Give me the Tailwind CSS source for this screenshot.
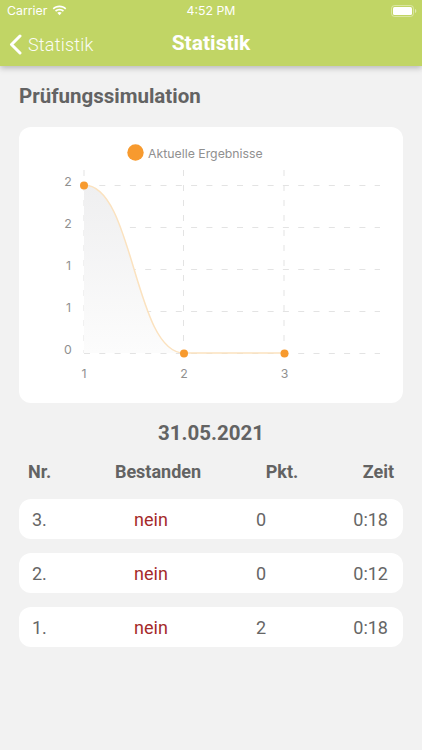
<!DOCTYPE html>
<html lang="de">
<head>
  <meta charset="UTF-8" />
  <meta name="viewport" content="width=device-width, initial-scale=1.0" />
  <title>Statistik</title>
  <script src="https://cdn.jsdelivr.net/npm/@tailwindcss/browser@4"></script>
</head>
<body class="w-[422px] h-[750px] overflow-hidden bg-[#f2f2f2] font-['Roboto',sans-serif]">

  <!-- Navbar -->
  <header class="relative h-[66px] bg-[#c1d565] text-white shadow-[0_2px_6px_rgba(0,0,0,0.25)]">
    <div class="relative h-[22px] flex items-center justify-between pl-[7px] pr-[5px] font-['Inter',sans-serif] text-[12.3px]">
      <div class="flex items-center gap-[5px]">
        <span>Carrier</span>
        <svg width="15" height="11" viewBox="0 0 15 11" fill="white" class="-mt-[1px]">
          <path d="M7.5 2.2c2.2 0 4.2.8 5.7 2.2l1.1-1.2C12.5 1.4 10.1.4 7.5.4S2.5 1.4.7 3.2l1.1 1.2c1.5-1.4 3.5-2.2 5.7-2.2z"/>
          <path d="M7.5 5.4c1.3 0 2.5.5 3.4 1.3l1.1-1.2C10.8 4.4 9.2 3.7 7.5 3.7s-3.3.7-4.5 1.8l1.1 1.2c.9-.8 2.1-1.3 3.4-1.3z"/>
          <path d="M7.5 7c-.9 0-1.6.3-2.2.8l2.2 2.5 2.2-2.5C9.1 7.3 8.4 7 7.5 7z"/>
        </svg>
      </div>
      <span class="absolute left-0 right-0 text-center">4:52 PM</span>
      <svg width="26" height="12" viewBox="0 0 26 12">
        <rect x="0.5" y="0.5" width="22" height="11" rx="3" fill="none" stroke="white" stroke-opacity="0.4"/>
        <rect x="2" y="2" width="19" height="8" rx="1.5" fill="white"/>
        <path d="M24 4v4c.8-.3 1.3-1.1 1.3-2S24.800 4.300 24 4z" fill="white" fill-opacity="0.5"/>
      </svg>
    </div>
    <div class="relative h-[44px] flex items-center justify-center">
      <div class="absolute left-[9px] top-0 h-full flex items-center gap-[6px]">
        <svg width="13" height="21" viewBox="0 0 13 21" fill="none" stroke="white" stroke-width="3" stroke-linecap="round" stroke-linejoin="round">
          <path d="M11 2 2.500 10.500 11 19"/>
        </svg>
        <span class="text-[18px] font-light tracking-[0.2px] text-white/95">Statistik</span>
      </div>
      <h1 class="text-[21px] font-bold">Statistik</h1>
    </div>
  </header>

  <main class="px-[19px]">
    <h2 class="pt-[18px] text-[20.500px] leading-[24px] font-bold text-[#636363]">Prüfungssimulation</h2>

    <!-- Chart -->
    <section class="mt-[19px] h-[276px] bg-white rounded-[12px]">
      <svg width="384" height="276" viewBox="19 127 384 276" class="block">
        <defs>
          <linearGradient id="area" x1="0" y1="0" x2="0" y2="1">
            <stop offset="0" stop-color="#efeff0" />
            <stop offset="1" stop-color="#fcfcfc" />
          </linearGradient>
        </defs>
        <g stroke="#e3e3e3" stroke-width="1" stroke-dasharray="6 9.300" fill="none">
          <path d="M84 185.500H380M84 227.500H380M84 269.500H380M84 311.500H380M84 353.500H380"/>
          <path d="M84 170V353M183.500 170V353M284 170V353" stroke-dasharray="6 9"/>
        </g>
        <path d="M84 185C134 185 134 353 184 353H284V353H84Z" fill="url(#area)"/>
        <path d="M84 185C134 185 134 353 184 353H284" fill="none" stroke="#fbe2bf" stroke-width="1.500"/>
        <g fill="#f79a2e">
          <circle cx="84" cy="185.500" r="4"/>
          <circle cx="184" cy="353.500" r="4"/>
          <circle cx="284.500" cy="353.500" r="4"/>
          <circle cx="135.500" cy="152.500" r="8.200"/>
        </g>
        <g font-family="Inter, sans-serif" font-size="12.300" fill="#909090">
          <text x="148" y="158">Aktuelle Ergebnisse</text>
          <g text-anchor="middle">
            <text x="68" y="186">2</text>
            <text x="68" y="228">2</text>
            <text x="68.500" y="270">1</text>
            <text x="68.500" y="312">1</text>
            <text x="68" y="354">0</text>
            <text x="84" y="378">1</text>
            <text x="184" y="378">2</text>
            <text x="284.500" y="378">3</text>
          </g>
        </g>
      </svg>
    </section>

    <h3 class="mt-[17px] text-center text-[20.500px] leading-[26px] font-bold text-[#636363]">31.05.2021</h3>

    <!-- Table head -->
    <div class="mt-[15px] -mx-px pl-[10px] pr-[10px] grid grid-cols-[60px_140px_108px_1fr] text-[18px] leading-[22px] font-bold text-[#636363]">
      <span>Nr.</span>
      <span class="text-center">Bestanden</span>
      <span class="text-center">Pkt.</span>
      <span class="text-right">Zeit</span>
    </div>

    <!-- Rows -->
    <div class="mt-[16px] flex flex-col gap-[14px] text-[18px] text-[#666666]">
      <div class="h-[40px] pt-[1px] bg-white rounded-[12px] pl-[13px] pr-[15px] grid grid-cols-[70px_98px_122px_1fr] items-center">
        <span>3.</span>
        <span class="text-center text-[#a52a2a]">nein</span>
        <span class="text-center">0</span>
        <span class="text-right">0:18</span>
      </div>
      <div class="h-[40px] pt-[1px] bg-white rounded-[12px] pl-[13px] pr-[15px] grid grid-cols-[70px_98px_122px_1fr] items-center">
        <span>2.</span>
        <span class="text-center text-[#a52a2a]">nein</span>
        <span class="text-center">0</span>
        <span class="text-right">0:12</span>
      </div>
      <div class="h-[40px] pt-[1px] bg-white rounded-[12px] pl-[13px] pr-[15px] grid grid-cols-[70px_98px_122px_1fr] items-center">
        <span>1.</span>
        <span class="text-center text-[#a52a2a]">nein</span>
        <span class="text-center">2</span>
        <span class="text-right">0:18</span>
      </div>
    </div>
  </main>
</body>
</html>
